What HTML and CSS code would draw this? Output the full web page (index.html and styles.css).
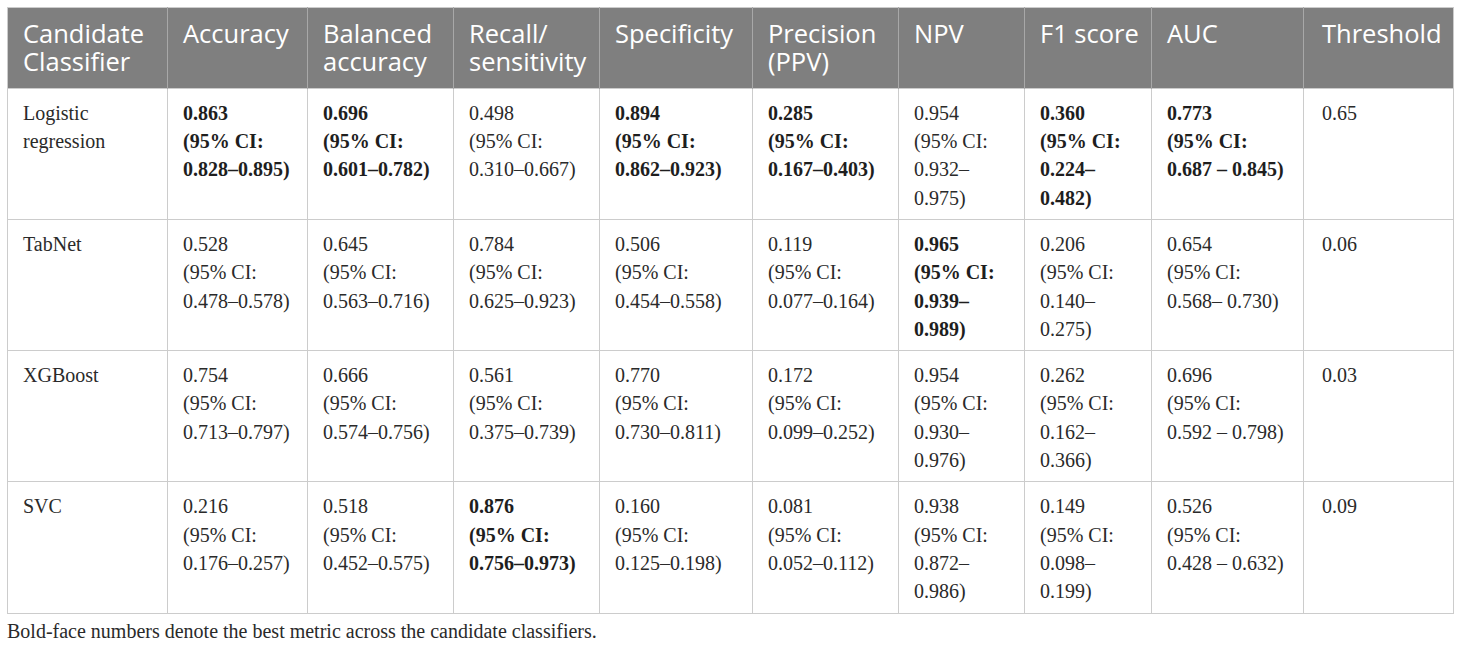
FILE: index.html
```html
<!DOCTYPE html>
<html lang="en">
<head>
<meta charset="utf-8">
<title>Candidate classifiers</title>
<link rel="stylesheet" href="styles.css">
</head>
<body>
<div class="wrap">
<table class="metrics">
  <colgroup>
    <col class="c1"><col class="c2"><col class="c3"><col class="c4"><col class="c5">
    <col class="c6"><col class="c7"><col class="c8"><col class="c9"><col class="c10">
  </colgroup>
  <thead>
    <tr>
      <th>Candidate<br>Classifier</th>
      <th>Accuracy</th>
      <th>Balanced<br>accuracy</th>
      <th>Recall/<br>sensitivity</th>
      <th>Specificity</th>
      <th>Precision<br>(PPV)</th>
      <th>NPV</th>
      <th>F1 score</th>
      <th>AUC</th>
      <th class="thr">Threshold</th>
    </tr>
  </thead>
  <tbody>
    <tr>
      <td>Logistic<br>regression</td>
      <td><b>0.863<br>(95% CI:<br>0.828–0.895)</b></td>
      <td><b>0.696<br>(95% CI:<br>0.601–0.782)</b></td>
      <td>0.498<br>(95% CI:<br>0.310–0.667)</td>
      <td><b>0.894<br>(95% CI:<br>0.862–0.923)</b></td>
      <td><b>0.285<br>(95% CI:<br>0.167–0.403)</b></td>
      <td>0.954<br>(95% CI:<br>0.932–<br>0.975)</td>
      <td><b>0.360<br>(95% CI:<br>0.224–<br>0.482)</b></td>
      <td><b>0.773<br>(95% CI:<br>0.687 – 0.845)</b></td>
      <td class="thr">0.65</td>
    </tr>
    <tr>
      <td>TabNet</td>
      <td>0.528<br>(95% CI:<br>0.478–0.578)</td>
      <td>0.645<br>(95% CI:<br>0.563–0.716)</td>
      <td>0.784<br>(95% CI:<br>0.625–0.923)</td>
      <td>0.506<br>(95% CI:<br>0.454–0.558)</td>
      <td>0.119<br>(95% CI:<br>0.077–0.164)</td>
      <td><b>0.965<br>(95% CI:<br>0.939–<br>0.989)</b></td>
      <td>0.206<br>(95% CI:<br>0.140–<br>0.275)</td>
      <td>0.654<br>(95% CI:<br>0.568– 0.730)</td>
      <td class="thr">0.06</td>
    </tr>
    <tr>
      <td>XGBoost</td>
      <td>0.754<br>(95% CI:<br>0.713–0.797)</td>
      <td>0.666<br>(95% CI:<br>0.574–0.756)</td>
      <td>0.561<br>(95% CI:<br>0.375–0.739)</td>
      <td>0.770<br>(95% CI:<br>0.730–0.811)</td>
      <td>0.172<br>(95% CI:<br>0.099–0.252)</td>
      <td>0.954<br>(95% CI:<br>0.930–<br>0.976)</td>
      <td>0.262<br>(95% CI:<br>0.162–<br>0.366)</td>
      <td>0.696<br>(95% CI:<br>0.592 – 0.798)</td>
      <td class="thr">0.03</td>
    </tr>
    <tr>
      <td>SVC</td>
      <td>0.216<br>(95% CI:<br>0.176–0.257)</td>
      <td>0.518<br>(95% CI:<br>0.452–0.575)</td>
      <td><b>0.876<br>(95% CI:<br>0.756–0.973)</b></td>
      <td>0.160<br>(95% CI:<br>0.125–0.198)</td>
      <td>0.081<br>(95% CI:<br>0.052–0.112)</td>
      <td>0.938<br>(95% CI:<br>0.872–<br>0.986)</td>
      <td>0.149<br>(95% CI:<br>0.098–<br>0.199)</td>
      <td>0.526<br>(95% CI:<br>0.428 – 0.632)</td>
      <td class="thr">0.09</td>
    </tr>
  </tbody>
</table>
<p class="note">Bold-face numbers denote the best metric across the candidate classifiers.</p>
</div>
</body>
</html>
```

FILE: styles.css
```css
html, body {
  margin: 0;
  padding: 0;
  background: #ffffff;
}

.wrap {
  padding: 7px 0 0 7px;
}

.metrics {
  border-collapse: collapse;
  table-layout: fixed;
  width: 1446px;
  border: 1px solid #cccccc;
}

.c1 { width: 160px; }
.c2 { width: 140px; }
.c3 { width: 146px; }
.c4 { width: 146px; }
.c5 { width: 153px; }
.c6 { width: 146px; }
.c7 { width: 126px; }
.c8 { width: 127px; }
.c9 { width: 152px; }
.c10 { width: 150px; }

.metrics th {
  background: #7f7f7f;
  color: #ffffff;
  font-family: "Open Sans", "Noto Sans", sans-serif;
  font-weight: 400;
  font-size: 25.5px;
  line-height: 28.4px;
  text-align: left;
  vertical-align: top;
  padding: 11px 6px 12px 15px;
  border-right: 1px solid #a8a8a8;
  white-space: nowrap;
}

.metrics th:last-child {
  border-right: 1px solid #cccccc;
}

.metrics td {
  font-family: "Liberation Serif", "Times New Roman", serif;
  font-size: 20px;
  line-height: 28.3px;
  color: #2a2a2a;
  text-align: left;
  vertical-align: top;
  padding: 10px 4px 7px 15px;
  border: 1px solid #cccccc;
  white-space: nowrap;
}

.metrics .thr {
  padding-left: 18px;
}

.metrics b {
  font-weight: 700;
  color: #1e1e1e;
}

.note {
  margin: 7px 0 0;
  font-family: "Liberation Serif", "Times New Roman", serif;
  font-size: 20px;
  line-height: 20px;
  color: #2a2a2a;
}
```
